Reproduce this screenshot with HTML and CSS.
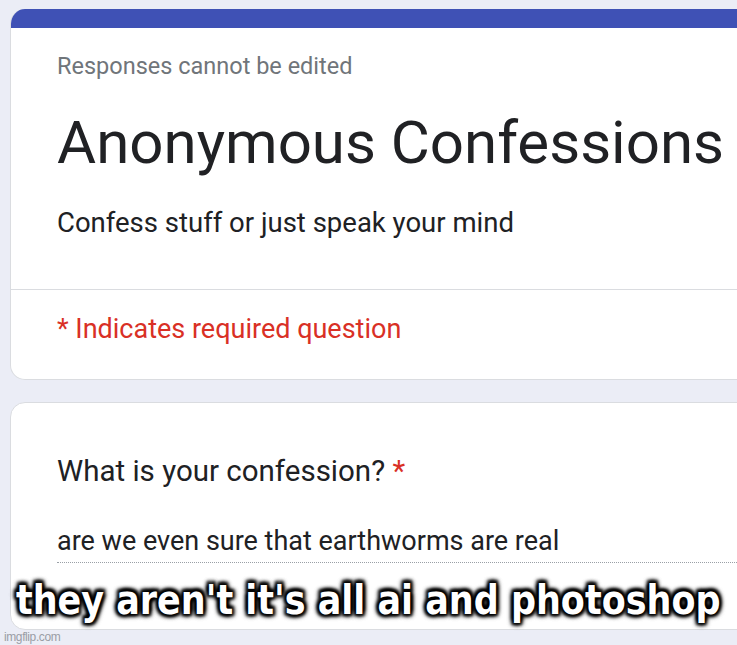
FILE: index.html
```html
<!DOCTYPE html>
<html lang="en">
<head>
    <meta charset="UTF-8">
    <meta name="viewport" content="width=device-width, initial-scale=1.0">
    <title>Anonymous Confessions</title>
    <link rel="stylesheet" href="styles.css">
</head>
<body>

    <!-- Form header card -->
    <div class="card header-card">
        <div class="card-bar"></div>
        <div class="header-top">
            <p class="note">Responses cannot be edited</p>
            <h1 class="title">Anonymous Confessions</h1>
            <p class="description">Confess stuff or just speak your mind</p>
        </div>
        <div class="header-bottom">
            <p class="required-note">* Indicates required question</p>
        </div>
    </div>

    <!-- Question card -->
    <div class="card question-card">
        <p class="question">What is your confession? <span class="star">*</span></p>
        <div class="answer">are we even sure that earthworms are real</div>
    </div>

    <!-- Meme caption -->
    <div class="caption"><span class="caption-text">they aren't it's all ai and photoshop</span></div>
    <div class="watermark">imgflip.com</div>

</body>
</html>
```

FILE: styles.css
```css
/* General Page Styles */
html, body {
    height: 100%;
}

body {
    font-family: 'Roboto', 'Liberation Sans', sans-serif;
    background: #ebedf6;
    color: #202124;
    margin: 0;
    padding: 9px 0 0 10px;
    overflow: hidden;
    position: relative;
    box-sizing: border-box;
}

p {
    margin: 0;
}

/* Cards */
.card {
    background: #ffffff;
    border: 1px solid #dadce0;
    border-radius: 15px;
    width: 780px;
    overflow: hidden;
}

.header-card {
    border-top: none;
}

.card-bar {
    height: 19px;
    background: #3f51b5;
}

.header-top {
    padding: 23px 46px 0;
    height: 262px;
    box-sizing: border-box;
    border-bottom: 1px solid #dadce0;
}

.note {
    font-size: 23.5px;
    color: #70757a;
    line-height: 30px;
}

.title {
    font-size: 60px;
    font-weight: 400;
    line-height: 70px;
    margin: 27px 0 0;
}

.description {
    font-size: 27.5px;
    line-height: 34px;
    margin-top: 28px;
}

.header-bottom {
    padding: 22px 46px 0;
    height: 89px;
    box-sizing: border-box;
}

.required-note {
    font-size: 27px;
    color: #d93025;
    line-height: 34px;
}

/* Question card */
.question-card {
    margin-top: 22px;
    padding: 50px 46px 0;
    height: 228px;
    box-sizing: border-box;
}

.question {
    font-size: 29.5px;
    line-height: 36px;
}

.star {
    color: #d93025;
}

.answer {
    margin-top: 35px;
    font-size: 27px;
    line-height: 34px;
    padding-bottom: 4px;
    border-bottom: 1px dotted #9aa0a6;
    width: 700px;
}

/* Meme overlay */
.caption {
    position: absolute;
    left: 0;
    right: 0;
    top: 580px;
    text-align: center;
    white-space: nowrap;
}

.caption-text {
    display: inline-block;
    font-family: 'DejaVu Sans Condensed', 'DejaVu Sans', sans-serif;
    font-stretch: condensed;
    font-weight: bold;
    font-size: 36px;
    line-height: 40px;
    color: #ffffff;
    transform: scale(1.08, 1.14);
    text-shadow:
        2px 2px 3px #000, -2px -2px 3px #000,
        2px -2px 3px #000, -2px 2px 3px #000,
        0 0 6px #000, 0 0 6px #000, 0 0 3px #000;
}

.watermark {
    position: absolute;
    left: 4px;
    top: 630px;
    font-family: 'Liberation Sans', sans-serif;
    font-size: 12px;
    line-height: 14px;
    color: #9a9da5;
    letter-spacing: -0.4px;
}
```
